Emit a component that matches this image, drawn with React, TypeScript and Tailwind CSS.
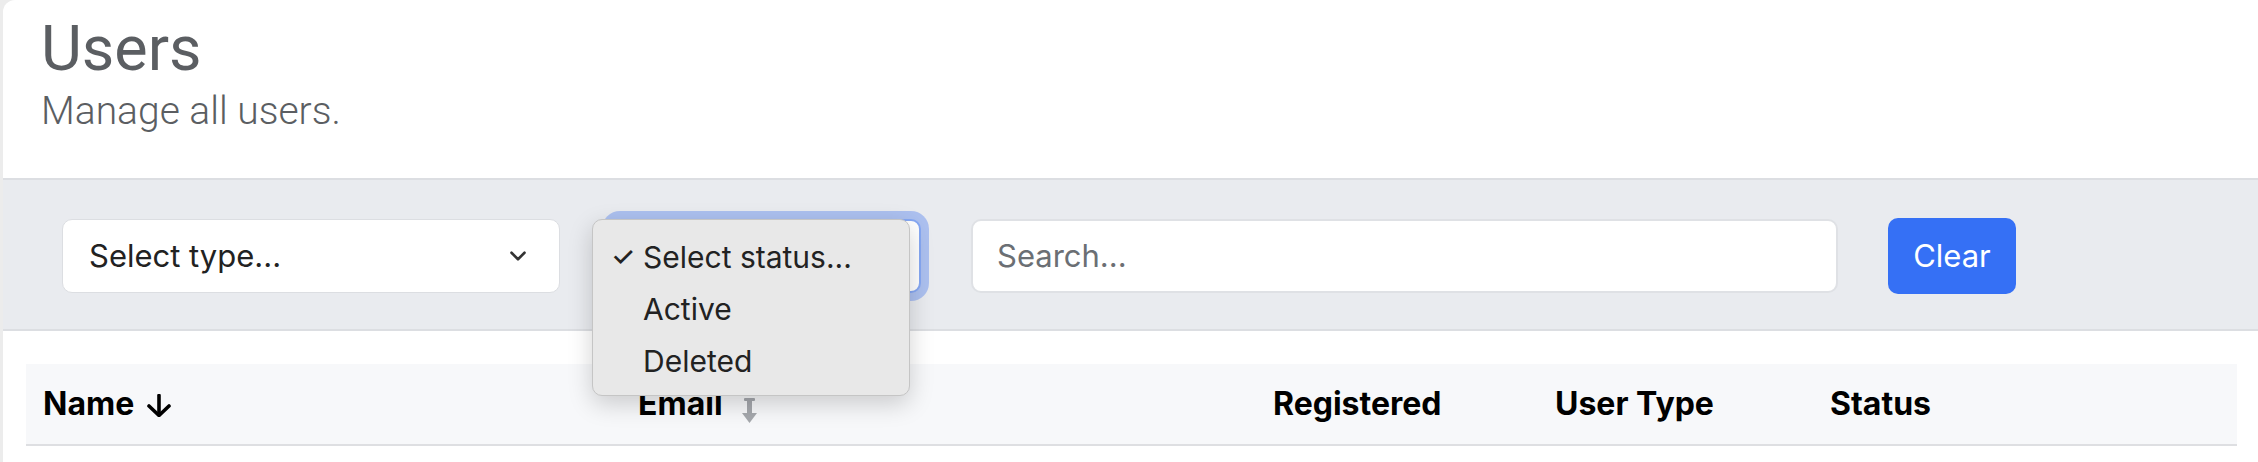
import { ChevronDown } from "lucide-react";

const inter = "font-['Inter','Liberation_Sans',sans-serif]";

function SortDownIcon() {
  return (
    <svg width="26" height="23" viewBox="0 0 26 23" fill="none" className="ml-[12px] mt-[2px]">
      <path d="M13 1.5v19" stroke="#000" strokeWidth="3.6" strokeLinecap="round" />
      <path d="M3 12l10 9.5 10-9.5" stroke="#000" strokeWidth="3.6" strokeLinecap="round" strokeLinejoin="round" />
    </svg>
  );
}

function SortNeutralIcon() {
  return (
    <svg width="15" height="25" viewBox="0 0 15 25" className="ml-[19px] mt-[12px]">
      <rect x="2" y="0" width="11" height="3" rx="1" fill="#a5a8ad" />
      <rect x="5" y="0" width="5" height="17" fill="#a5a8ad" />
      <path d="M0 15h15l-7.5 10z" fill="#a5a8ad" />
    </svg>
  );
}

function StatusMenu() {
  const items = ["Select status...", "Active", "Deleted"];
  return (
    <div className="absolute left-[592px] top-[219px] z-10 flex h-[177px] w-[318px] flex-col rounded-[10px] border border-[#c5c5c5] bg-[#e8e8e8] pt-[11px] shadow-[0_8px_24px_rgba(0,0,0,0.18)]">
      {items.map((item, i) => (
        <div key={item} className={`flex h-[52px] items-center text-[30px] text-[#222] ${inter}`}>
          <span className="w-[50px] pl-[18px] text-[27px] font-medium">{i === 0 ? "✓" : ""}</span>
          <span>{item}</span>
        </div>
      ))}
    </div>
  );
}

export default function App() {
  return (
    <div className="relative h-[462px] w-[2258px] overflow-hidden bg-[#ececec]">
      <div className="ml-[3px] h-full rounded-tl-[12px] bg-white">
        <header className="h-[178px] pl-[38px] pt-[17px] font-['Roboto',sans-serif] text-[#5b5e62]">
          <h1 className="text-[63px] font-normal leading-[63px]">Users</h1>
          <p className="mt-[12px] text-[39px] font-light leading-[39px]">Manage all users.</p>
        </header>

        <section className={`flex gap-[50px] border-y-2 border-[#dcdee2] bg-[#e9ebef] pb-[34px] pl-[59px] pt-[39px] text-[31px] ${inter}`}>
          <div className="flex h-[74px] w-[498px] items-center justify-between rounded-[10px] border border-[#dcdee2] bg-white pl-[26px] pr-[28px] text-[#222]">
            <span>Select type...</span>
            <ChevronDown size={26} strokeWidth={2.4} className="text-[#333]" />
          </div>
          <div className="h-[74px] w-[311px] rounded-[10px] border-2 border-[#86a8f3] bg-white ring-[8px] ring-[#3b6ff0]/35" />
          <div className="flex h-[74px] w-[867px] items-center rounded-[10px] border-2 border-[#dfe1e5] bg-white pl-[24px] text-[#6b6f74]">
            Search...
          </div>
          <button className="h-[76px] w-[128px] -translate-y-px rounded-[10px] bg-[#3570f5] text-white">
            Clear
          </button>
        </section>

        <div className="mr-[21px] mt-[33px] ml-[23px]">
          <div className={`grid h-[82px] grid-cols-[612px_635px_282px_275px_1fr] items-center border-b-2 border-[#dedfe2] bg-[#f7f8fa] text-[32px] font-bold text-black ${inter}`}>
            <div className="flex items-center pl-[17px]">
              Name
              <SortDownIcon />
            </div>
            <div className="flex items-center">
              Email
              <SortNeutralIcon />
            </div>
            <div>Registered</div>
            <div>User Type</div>
            <div>Status</div>
          </div>
        </div>
      </div>
      <StatusMenu />
    </div>
  );
}
